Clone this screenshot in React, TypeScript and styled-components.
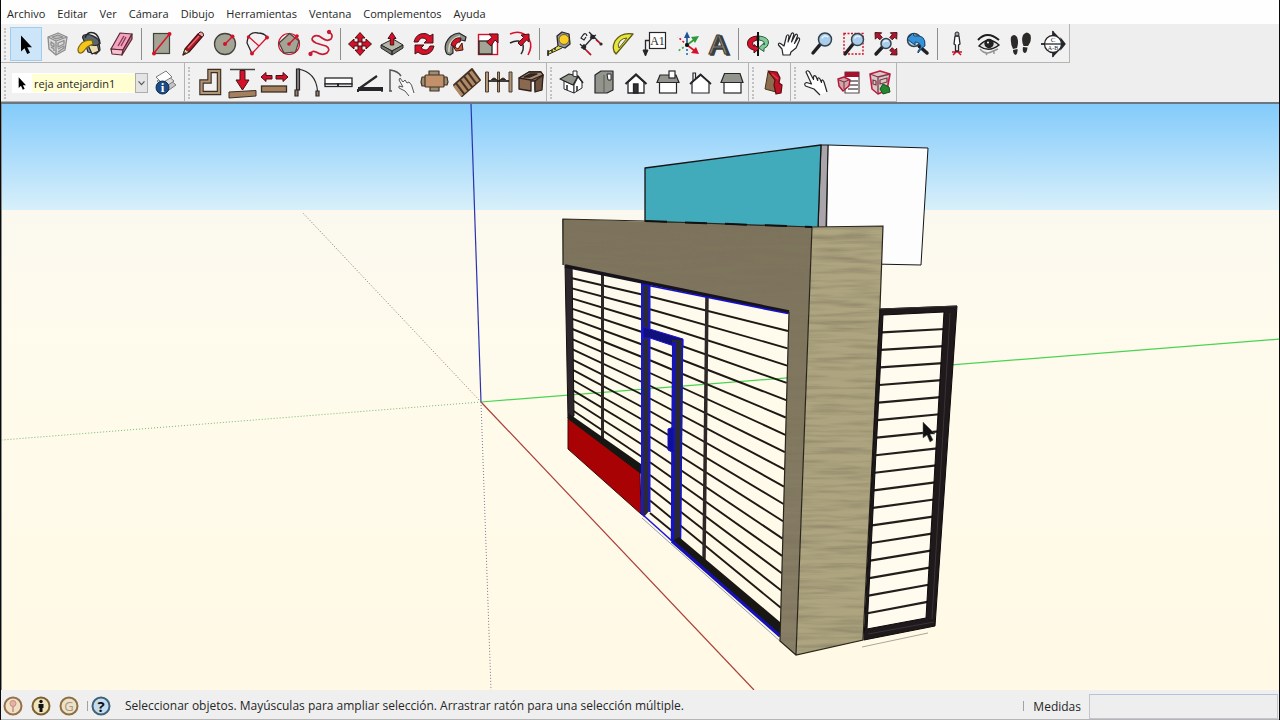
import React, { ReactNode } from 'react';
import styled, { createGlobalStyle } from 'styled-components';

const GlobalStyle = createGlobalStyle`
  * { box-sizing: border-box; }
  body {
    margin: 0;
    background: #f0f0f0;
    color: #262626;
    font-family: "Open Sans", "Noto Sans", sans-serif;
    font-size: 12px;
  }
  button, select, input { font: inherit; color: inherit; }
`;

const AppWindow = styled.div`
  display: flex;
  flex-direction: column;
  min-height: 100vh;
  border: solid #0a0a0a;
  border-width: 0 1px;
  background: #f0f0f0;
`;

const MenuBar = styled.nav`
  display: flex;
  height: 24px;
  padding: 4px 0 0;
  background: #fdfefd;
`;

const MenuItem = styled.button`
  padding: 0 6px;
  border: 0;
  background: none;
  font-size: 11px;
  line-height: 20px;
  white-space: nowrap;
`;

const ToolbarArea = styled.div`
  display: flex;
  flex-direction: column;
  background: #efeeef;
  border-bottom: 2px solid #6c7680;
`;

const ToolbarRow = styled.div`
  display: flex;
  height: 39px;
`;

const Toolbar = styled.div<{ $endGap?: number }>`
  display: flex;
  align-items: center;
  padding: 2px ${p => p.$endGap ?? 0}px 0 2px;
  background: #f2f1f1;
  border-right: 1px solid #b4b4b4;
  border-bottom: 1px solid #b4b4b4;
`;

const Grip = styled.span`
  width: 3px;
  height: 32px;
  margin: 0 3px 0 1px;
  border-left: 2px dotted #c2c2c2;
`;

const Divider = styled.span`
  width: 1px;
  height: 32px;
  margin: 0 3px;
  background: #8e8e8e;
`;

const ToolButton = styled.button<{ $active?: boolean }>`
  display: block;
  width: 32px;
  height: 34px;
  padding: 0;
  border: 1px solid ${p => (p.$active ? '#9fcdf0' : 'transparent')};
  background: ${p => (p.$active ? '#cce5f8' : 'none')};
`;

const ToolIcon = styled.svg`
  display: block;
  width: 32px;
  height: 32px;
  margin-left: -1px;
  font-family: "Liberation Serif", serif;
`;

const LayerBox = styled.div`
  position: relative;
  display: flex;
  align-items: center;
  width: 136px;
  height: 20px;
  margin: 0 2px;
  background: #fff;
`;

const LayerPointer = styled.svg`
  width: 20px;
  height: 16px;
`;

const LayerSelect = styled.select`
  flex: 1;
  height: 18px;
  padding: 0 0 0 2px;
  border: 0;
  background: #ffffd2;
  font-size: 11px;
  appearance: none;
`;

const LayerArrow = styled.svg`
  position: absolute;
  right: 0;
  top: 0;
  width: 13px;
  height: 20px;
  background: #e4e4e4;
  border: 1px solid #adadad;
  pointer-events: none;
`;

const Viewport = styled.main`
  flex: 1 1 0;
  min-height: 400px;
  display: flex;
  border-left: 1px solid #8a8f94;
`;

const Scene = styled.svg`
  flex: 1;
  width: 100%;
  min-width: 0;
  background: #fffae8;
`;

const StatusBar = styled.footer`
  display: flex;
  align-items: center;
  height: 30px;
  padding: 3px 1px 0 2px;
  background: #efeff0;
  border-bottom: 1px solid #b5b5b5;
`;

const StatusButton = styled.button`
  width: 20px;
  height: 20px;
  padding: 0;
  margin-right: 8px;
  border: 0;
  background: none;
`;

const StatusIcon = styled.svg`
  display: block;
  width: 20px;
  height: 20px;
  font-family: "Open Sans", sans-serif;
`;

const StatusDivider = styled.span`
  width: 1px;
  height: 10px;
  margin-right: 3px;
  background: #a2a2a2;
`;

const Hint = styled.span`
  flex: 1;
  margin-left: 6px;
  line-height: 20px;
  white-space: nowrap;
  overflow: hidden;
`;

const MeasureLabel = styled.label`
  margin: 0 8px 0 6px;
`;

const MeasureInput = styled.input`
  width: 189px;
  height: 25px;
  border: 1px solid #c2c6cc;
  border-top-color: #b9c3d8;
  background: #eeeeee;
`;

const RED = '#d5112a';
const INK = '#26262a';
const STONE = '#a3a494';
const WOOD = '#a5805f';

/* Block arrow pointing up, its tip at the given point. */
function Arrow({ x, y, r = 0, fill = RED, s = 1 }: { x: number; y: number; r?: number; fill?: string; s?: number }) {
  return (
    <path
      d="M0 0L5 5.500H2V9.500H-2V5.500H-5Z"
      transform={`translate(${x} ${y}) rotate(${r}) scale(${s})`}
      fill={fill}
      stroke="#4a1014"
      strokeWidth="1"
    />
  );
}

const pointer = <path d="M11 7.500V23.500L14.500 20.300L17.200 26L20 24.700L17.300 19.200H22Z" fill="#000" />;

const hand = (
  <path
    d="M9 27L8 21L4.500 17Q4 14.500 6.500 15.500L10 18L12.500 8Q14 5.500 15 8L14 14L17.500 5.500Q19.500 4 19.800 6.500L17.500 14L21.500 6.500Q23.500 5.500 23.500 8L20.500 15.500L24 10Q26 9.500 25.500 12L22 20L17 24L16 27Z"
    fill="#fff"
    stroke={INK}
    strokeWidth="1.200"
    strokeLinejoin="round"
  />
);

const pointingHand = (
  <path
    d="M27 25L24 15Q22.500 11.500 21.500 14V15.500L20 12Q18 9.500 17.700 12V13.500L16 9.500Q14 7.500 13.500 10V12.500L9.500 5Q7 2.500 6 5L11.500 17L6.500 15.500Q3.500 16.500 5.500 19L14 22L20 28"
    fill="#fff"
    stroke={INK}
    strokeWidth="1.200"
    strokeLinejoin="round"
  />
);

function Lens({ cx, cy, r, hx, hy }: { cx: number; cy: number; r: number; hx: number; hy: number }) {
  return (
    <>
      <path d={`M${cx - r * 0.7} ${cy + r * 0.7}L${hx} ${hy}`} stroke="#202024" strokeWidth="3.400" strokeLinecap="round" />
      <circle cx={cx} cy={cy} r={r} fill="#a9cdea" stroke="#34424e" strokeWidth="1.500" />
      <path d={`M${cx - r * 0.5} ${cy - 1}Q${cx - 1} ${cy - r * 0.8} ${cx + r * 0.5} ${cy - r * 0.4}`} fill="none" stroke="#e4f3ff" strokeWidth="1.500" />
    </>
  );
}

type Tool = { name: string; icon: ReactNode; active?: boolean };

const mainTools: Tool[][] = [
  [
    { name: 'Seleccionar', active: true, icon: pointer },
    {
      name: 'Crear componente',
      icon: (
        <g fill="#d9d9d9" stroke="#8c8c8c" strokeWidth="1.300" strokeLinejoin="round">
          <path d="M6 9L16 5L25 9L23 22L14 27L7 21Z" />
          <path d="M6 9L14 13L25 9M14 13V27M9 14L12 16V19L9 17ZM9 19L12 21V23M16 15L22 12.500V16L16 19ZM16 21L22 18V20L16 24" />
          <path d="M10 9L16 7L21 9L14 11Z" fill="#bbb" />
        </g>
      ),
    },
    {
      name: 'Pintar',
      icon: (
        <g stroke={INK} strokeWidth="1.200" strokeLinejoin="round">
          <path d="M9 9L25 14L26 22L22 26L14 24Z" fill="#8c9a9d" />
          <path d="M14 17L23 15L25 23L18 26Z" fill="#ecdcb0" />
          <ellipse cx="17" cy="12" rx="9" ry="4.500" transform="rotate(24 17 12)" fill="#59666d" />
          <path d="M11 10Q13 3 20 5Q25 7 26 16" fill="none" strokeWidth="1.500" />
          <path d="M18 12Q9 12 6 17Q3 21 4.500 24Q7 26.500 10 23Q13 18 19 16Z" fill="#f3c51d" stroke="#7b6413" />
        </g>
      ),
    },
    {
      name: 'Borrar',
      icon: (
        <g stroke="#5b2936" strokeWidth="1.200" strokeLinejoin="round">
          <path d="M5 21L14 5L26 6L17 22Z" fill="#f3a4bd" />
          <path d="M5 21L17 22L16 27L6 26Z" fill="#f7c1cf" />
          <path d="M17 22L26 6V11L16 27Z" fill="#c96c89" />
          <path d="M12 18L18 8M15 18L20 9" stroke="#8c3a55" strokeWidth="1.400" />
        </g>
      ),
    },
  ],
  [
    {
      name: 'Rectángulo',
      icon: (
        <>
          <rect x="8.500" y="5.500" width="16" height="20" fill={STONE} stroke="#43433d" strokeWidth="1.200" />
          <path d="M9 25L24.500 6" stroke={RED} strokeWidth="1.400" />
          <circle cx="9" cy="25.500" r="2" fill={RED} />
          <circle cx="24.500" cy="6" r="2" fill={RED} />
        </>
      ),
    },
    {
      name: 'Línea',
      icon: (
        <g strokeLinejoin="round">
          <path d="M6 27L8 21L21 6L25 9L12 24Z" fill="#b31927" stroke="#471016" strokeWidth="1.200" />
          <path d="M21 6L23 4Q27 4 26.500 8L25 9Z" fill="#e7a9a9" stroke="#471016" />
          <path d="M6 27L8 21L12 24Z" fill="#ead3a4" stroke="#43301c" />
          <path d="M6 27L8 24L9 25Z" fill="#111" />
          <path d="M11 20L22 8" stroke="#ee6a72" strokeWidth="1.200" />
        </g>
      ),
    },
    {
      name: 'Círculo',
      icon: (
        <>
          <circle cx="16" cy="16" r="10.500" fill={STONE} stroke="#43433d" strokeWidth="1.300" />
          <path d="M16 16L23.500 8.500" stroke={RED} strokeWidth="1.400" />
          <circle cx="16" cy="16" r="2" fill={RED} />
          <circle cx="23.500" cy="8.500" r="2" fill={RED} />
        </>
      ),
    },
    {
      name: 'Arco',
      icon: (
        <g fill="none">
          <path d="M11 25.500L6 15Q7 3 17 5Q23 5 26 9" stroke={INK} strokeWidth="1.300" />
          <path d="M11 25.500L26 9.500M8 9L18 18" stroke={RED} strokeWidth="1.300" />
          <circle cx="11" cy="25.500" r="2" fill={RED} />
          <circle cx="26" cy="9.500" r="2" fill={RED} />
          <circle cx="7.500" cy="9" r="1.700" fill={RED} />
        </g>
      ),
    },
    {
      name: 'Polígono',
      icon: (
        <>
          <circle cx="16" cy="16" r="10.500" fill="#f6e7e8" stroke={RED} strokeWidth="1.200" />
          <path d="M16.500 5.500L26 13L22.500 24L11 25L6 15Z" fill={STONE} stroke="#43433d" strokeWidth="1.200" />
          <path d="M16 16L24 8" stroke={RED} strokeWidth="1.400" />
          <circle cx="16" cy="16" r="1.800" fill={RED} />
          <circle cx="24" cy="8" r="1.800" fill={RED} />
        </>
      ),
    },
    {
      name: 'Mano alzada',
      icon: (
        <g fill="none" stroke="#c51b36" strokeWidth="1.700">
          <path d="M5.500 26Q7 22 11 24Q17 28 22 25Q26 21 21 18Q17 17 11 15Q5 12 8 9Q12 6 17 10Q22 14 26 11Q29 7 24 4" />
          <circle cx="5.500" cy="26" r="1.300" fill={RED} />
          <circle cx="24" cy="4" r="1.300" fill={RED} />
        </g>
      ),
    },
  ],
  [
    {
      name: 'Mover',
      icon: (
        <>
          <Arrow x={16} y={4.5} />
          <Arrow x={27.5} y={16} r={90} />
          <Arrow x={16} y={27.5} r={180} />
          <Arrow x={4.5} y={16} r={270} />
        </>
      ),
    },
    {
      name: 'Empujar/tirar',
      icon: (
        <g strokeLinejoin="round">
          <path d="M5 17L17 11L27 17L16 23Z" fill="#b6b8a7" stroke={INK} />
          <path d="M5 17L16 23V27L5 20ZM16 23L27 17V20L16 27Z" fill="#77796c" stroke={INK} />
          <path d="M16 4.500L20 10.500H17.700V17H14.300V10.500H12Z" fill={RED} stroke="#4a1014" />
        </g>
      ),
    },
    {
      name: 'Rotar',
      icon: (
        <g fill={RED} stroke="#4a1014" strokeWidth="1" strokeLinejoin="round">
          <path d="M6 14Q8 5 17 5.500Q20 6 22 8L25 6V15H16L19 12Q13 7 10 14Z" />
          <path d="M26 18Q24 27 15 26.500Q12 26 10 24L7 26V17H16L13 20Q19 25 22 18Z" />
        </g>
      ),
    },
    {
      name: 'Sígueme',
      icon: (
        <g strokeLinejoin="round">
          <path d="M7 26Q4 21 6 15Q10 6 19 5L26 9L25 13Q20 11 16 13Q12 17 13 25L10 27Z" fill="#8d9184" stroke={INK} strokeWidth="1.200" />
          <path d="M9 24Q8 12 20 8" fill="none" stroke="#d6d8cc" strokeWidth="1.500" />
          <path d="M11 17Q13 9 21 10L20 14Q16 14 15 19Z" fill={RED} stroke="#4a1014" />
          <path d="M13 18L18 21L22 15L23 22L16 23Z" fill="#d4582d" stroke="#4a1014" />
        </g>
      ),
    },
    {
      name: 'Escala',
      icon: (
        <>
          <rect x="6.500" y="6.500" width="19" height="20" fill="#fff" stroke={RED} strokeWidth="1.400" />
          <rect x="7" y="13" width="13" height="13" fill={STONE} stroke={INK} strokeWidth="1.300" />
          <path d="M26 6V15L23 12L19 18L14.500 14L20 9.500L17 6Z" fill={RED} stroke="#4a1014" />
        </>
      ),
    },
    {
      name: 'Equidistancia',
      icon: (
        <g fill="none" strokeWidth="1.500">
          <path d="M6 6Q18 1 25 11Q29 18 24 27" stroke={RED} />
          <path d="M6 15Q16 10 19 17Q20 22 17 26" stroke={INK} />
          <path d="M25 6V14L22.500 12L17 18L14 15L19.500 9.500L17 7Z" fill={RED} stroke="#4a1014" strokeWidth="1" />
        </g>
      ),
    },
  ],
  [
    {
      name: 'Medir',
      icon: (
        <g stroke={INK} strokeLinejoin="round">
          <path d="M14 8L19 4L26 6L27 16L22 20L15 18Z" fill="#9295a3" strokeWidth="1.300" />
          <circle cx="21" cy="11.500" r="5" fill="#f8cd27" stroke="#735f18" />
          <path d="M15 18L5 24V26.500L19 20" fill="#eadf39" />
          <path d="M5 22V28M9 22V24M12 20V22" strokeWidth="1.500" />
        </g>
      ),
    },
    {
      name: 'Acotaciones',
      icon: (
        <g fill="none" stroke={INK} strokeWidth="1.200">
          <path d="M9 19L18 9M14 4L25 15M5 16L16 27M6 20L11 17M15 10L21 7M16 6V12M9 16V22" />
          <path d="M21 12L26 16M11 22L16 27" stroke={RED} strokeWidth="1.500" />
          <circle cx="18" cy="9" r="1.700" fill={INK} />
          <circle cx="9" cy="19" r="1.700" fill={INK} />
          <circle cx="26" cy="16" r="1" fill={RED} />
          <path d="M8 7L6 10L9 12L11 9M8 7Q11 4 12 8" />
        </g>
      ),
    },
    {
      name: 'Transportador',
      icon: (
        <g stroke="#5c5b19" strokeLinejoin="round">
          <path d="M9 26Q4 21 8 13Q14 4 26 6Z" fill="#e7e43a" strokeWidth="1.300" />
          <path d="M12 20Q10 17 13 13Q16 10 20 10Z" fill="#f2f1f1" />
        </g>
      ),
    },
    {
      name: 'Texto',
      icon: (
        <g stroke={INK}>
          <path d="M10 12.500H6.500V25" fill="none" strokeWidth="1.300" />
          <path d="M4 22L6.500 28L9 22Z" fill={INK} />
          <rect x="10.500" y="4.500" width="16" height="16" fill="#fff" strokeWidth="1.200" />
          <text x="18.500" y="17" textAnchor="middle" fontSize="12" fill={INK} stroke="none">A1</text>
        </g>
      ),
    },
    {
      name: 'Ejes',
      icon: (
        <g fill="none" strokeWidth="1.600">
          <path d="M16 17V8" stroke="#1d5594" />
          <path d="M13 10L16 3.500L19 10Z" fill="#1d5594" />
          <path d="M16 17L24 11" stroke="#2c9a36" />
          <path d="M20 9L28 8L24 15Z" fill="#2c9a36" />
          <path d="M16 17L24 23" stroke={RED} />
          <path d="M25 19L28 26L20 25Z" fill={RED} />
          <path d="M16 17V28" stroke="#2b6cb5" strokeDasharray="2 2" />
          <path d="M16 17L7 23" stroke="#36a73e" strokeDasharray="2 2" />
          <path d="M16 17L7 9" stroke={RED} strokeDasharray="2 2" />
          <circle cx="16" cy="17" r="2" fill="#111" />
        </g>
      ),
    },
    {
      name: 'Texto 3D',
      icon: (
        <g fontSize="28" fontFamily="Liberation Sans" textAnchor="middle">
          <text x="17" y="26.500" fill="#3c3d3b" stroke="#3c3d3b" strokeWidth="1.500">A</text>
          <text x="15" y="25.500" fill="#8c8d87" stroke="#3c3d3b" strokeWidth="1">A</text>
        </g>
      ),
    },
  ],
  [
    {
      name: 'Orbitar',
      icon: (
        <g strokeLinejoin="round">
          <path d="M16 15V28" stroke="#111" strokeWidth="2" />
          <path d="M17 8Q27 9 26.500 15Q26 19 22 20.500V23.500L16.500 20L22 15V17Q24 13 17 12Z" fill="#83c79a" stroke="#23663c" />
          <path d="M15 8Q5 9 5.500 16Q6 21 12 22V25L17 20.500L12 16.500V18.500Q8 14 15 12Z" fill={RED} stroke="#4a1014" />
          <path d="M16 4V15" stroke="#111" strokeWidth="2" />
        </g>
      ),
    },
    { name: 'Desplazar', icon: hand },
    { name: 'Zoom', icon: <Lens cx={19} cy={11.5} r={6.500} hx={7} hy={25} /> },
    {
      name: 'Ventana de zoom',
      icon: (
        <>
          <rect x="6" y="5.500" width="19" height="20.500" fill="none" stroke={RED} strokeWidth="1.400" strokeDasharray="2 1.500" />
          <Lens cx={19.500} cy={11.5} r={6} hx={7} hy={26} />
        </>
      ),
    },
    {
      name: 'Ver modelo centrado',
      icon: (
        <>
          <Arrow x={5} y={4.5} r={-45} s={0.9} fill="#a91733" />
          <Arrow x={27} y={4.5} r={45} s={0.9} fill="#a91733" />
          <Arrow x={27} y={27} r={135} s={0.9} fill="#a91733" />
          <Lens cx={16} cy={15.500} r={5} hx={6} hy={26} />
        </>
      ),
    },
    {
      name: 'Vista previa',
      icon: (
        <>
          <path d="M17 18L25 25" stroke="#202024" strokeWidth="3.500" strokeLinecap="round" />
          <circle cx="12" cy="12" r="6.500" fill="#a9cdea" stroke="#34424e" strokeWidth="1.500" />
          <path d="M5 11L11 5L12 8Q24 6 23 18L20 20L16 25L16 23L19 19Q18 14 13 14L13 17Z" fill="#3692d8" stroke="#174167" />
        </>
      ),
    },
  ],
  [
    {
      name: 'Situar cámara',
      icon: (
        <g stroke={INK} strokeLinejoin="round">
          <path d="M16 23L12 27M16 23L20 27M11 24H21" stroke={RED} strokeWidth="1.500" />
          <path d="M14 8L13 16L14.500 17V23H17.500V17L19 16L18 8Z" fill="#fff" strokeWidth="1.300" />
          <circle cx="16" cy="6" r="2" fill="#aaa" />
        </g>
      ),
    },
    {
      name: 'Girar',
      icon: (
        <g fill="none" stroke="#1e1e1e" strokeWidth="1.400">
          <path d="M5 12Q14 2 26 12" strokeWidth="2" />
          <path d="M6 18Q15 7 26 17Q16 25 6 18Z" fill="#e0e0e0" />
          <circle cx="16" cy="15.500" r="4" fill="#222" />
          <circle cx="15" cy="14.500" r="1" fill="#fff" stroke="none" />
          <path d="M7 21Q12 27 18 24L25 21M12 24L14 27M21 23V26" stroke="#909090" />
        </g>
      ),
    },
    {
      name: 'Caminar',
      icon: (
        <g fill="#2c2a29">
          <path d="M6 9Q9 5 12 9Q14 14 12 20L8 21Q5 15 6 9Z" />
          <path d="M8 22L12.500 21Q13 26 10.500 27Q8 26 8 22Z" />
          <path d="M18 7Q22 2 25.500 7Q27 13 23 18L18.500 18Q16 12 18 7Z" />
          <path d="M18 19L22.500 19.500Q22 25 19.500 25Q17 24 18 19Z" />
        </g>
      ),
    },
    {
      name: 'Plano de sección',
      icon: (
        <g stroke={INK} strokeWidth="1.300">
          <path d="M16 3V29M4 16H28" />
          <path d="M16 4L20 8H16ZM16 28L20 24H16ZM24 11L28 16L24 21Z" fill={INK} />
          <circle cx="16" cy="16" r="8.500" fill="#fff" />
          <path d="M4 16H28" />
          <text x="16" y="14" textAnchor="middle" fontSize="7" stroke="none" fill={INK}>C</text>
          <text x="16" y="22" textAnchor="middle" fontSize="6" stroke="none" fill={INK}>A-B</text>
        </g>
      ),
    },
  ],
];

const layerManager: Tool = {
  name: 'Gestor de capas',
  icon: (
    <>
      <g fill="#fff" stroke="#7a7a7a" strokeLinejoin="round">
        <path d="M9 18L19 12L26 18L16 25Z" fill="#c6c6c6" />
        <path d="M7 14L17 8L24 14L14 21Z" fill="#ddd" />
        <path d="M6 10L16 4L22 10L12 16Z" />
      </g>
      <circle cx="12.500" cy="20.500" r="6.500" fill="#1c4b86" stroke="#0d2b52" />
      <text x="12.500" y="25" textAnchor="middle" fontSize="13" fontWeight="700" fill="#fff">i</text>
    </>
  ),
};

const buildTools: Tool[] = [
  {
    name: 'Muro',
    icon: (
      <g strokeLinejoin="miter" fill="none">
        <path d="M15.500 4H25V26H7.500V14.500H15.500Z" stroke="#3b2e25" strokeWidth="4.500" />
        <path d="M15.500 4H25V26H7.500V14.500H15.500Z" stroke="#b29476" strokeWidth="2.200" />
      </g>
    ),
  },
  {
    name: 'Altura',
    icon: (
      <>
        <path d="M4 2.500H29" stroke="#444" strokeWidth="1.500" />
        <path d="M3 25L30 23.500V29L3 31Z" fill={WOOD} stroke="#3b2e25" />
        <path d="M14 3.500H19V13H23L16.500 23L10 13H14Z" fill={RED} stroke="#4a1014" />
      </>
    ),
  },
  {
    name: 'Longitud',
    icon: (
      <>
        <rect x="3.500" y="19" width="25" height="6" fill={WOOD} stroke="#3b2e25" strokeWidth="1.300" />
        <path d="M3 10L8 5.500V8.500H14V12H8V14.500ZM30 10L25 5.500V8.500H18V12H25V14.500Z" fill={RED} stroke="#4a1014" />
      </>
    ),
  },
  {
    name: 'Puerta',
    icon: (
      <g fill="none" stroke={INK} strokeWidth="1.200">
        <path d="M8 2Q26 5 27.500 24" />
        <path d="M6.500 2H9.500V23H6.500Z" fill="#8b847b" />
        <path d="M5 23H8V29H5ZM26 24H29V29H26Z" fill={WOOD} />
      </g>
    ),
  },
  {
    name: 'Ventana',
    icon: (
      <g fill="#fff" stroke={INK} strokeWidth="1.300">
        <rect x="3" y="11" width="27" height="6" />
        <rect x="3" y="17" width="27" height="2.500" />
        <path d="M16 16V19" strokeWidth="2" />
      </g>
    ),
  },
  {
    name: 'Puerta abatible',
    icon: (
      <g fill="none" stroke={INK} strokeWidth="1.400">
        <path d="M6 21L23 9" strokeWidth="2.200" />
        <path d="M4 21H28V23H4V25" strokeWidth="2" />
        <path d="M28 20V25" />
      </g>
    ),
  },
  {
    name: 'Editar puerta',
    icon: (
      <>
        <path d="M4 24V3Q12 4 15 9M3 24H6" fill="none" stroke="#555" strokeWidth="1.500" />
        <path d="M28 26L25.500 18L23 15L21 16L19 13L17 15L14 11L13 13L17 20L13 19V21L19 24L23 29" fill="#f7f7f7" stroke="#555" />
      </>
    ),
  },
  {
    name: 'Mobiliario',
    icon: (
      <g fill="#a87f5a" stroke="#473224" strokeWidth="1.200" strokeLinejoin="round">
        <path d="M11 4H21V9H11ZM12 19H21V24H12ZM4 10H9V19H4L3 15ZM24 10H29L30 15L29 18H24Z" fill="#988f78" />
        <rect x="7" y="8" width="19" height="12" rx="1" fill="#c2916a" />
      </g>
    ),
  },
  {
    name: 'Cubierta',
    icon: (
      <g strokeLinejoin="round">
        <path d="M4 18L22 2L30 13L12 29Z" fill="#473224" stroke="#473224" strokeWidth="2" />
        <path d="M4.500 18.500L12 28.500M8.500 15L16 25M12.500 11.500L20 21.500M16.500 8L24 18M20.500 4.500L28 14.500" stroke="#b08a66" strokeWidth="3.200" />
      </g>
    ),
  },
  {
    name: 'Columnas',
    icon: (
      <g stroke="#4e3e30">
        <path d="M3.500 5H6.500V25H3.500ZM27 5H30V25H27ZM15.500 5H17.500V25H15.500Z" fill="#b29476" />
        <path d="M6 14H27" stroke="#111" strokeWidth="1.600" />
        <path d="M9 13Q12 9 15 13ZM18 13Q21 9 24 13Z" fill="#111" />
      </g>
    ),
  },
  {
    name: 'Habitación',
    icon: (
      <g stroke="#2f211a" strokeWidth="1.300" strokeLinejoin="round">
        <path d="M5 11L15 5L27 5L29 8L27 23L21 23V14L17 14V24L5 22Z" fill="#8a6951" />
        <path d="M5 11L15 5L27 5L29 8L17 13Z" fill="#a28a76" />
        <path d="M10 10L16 7H23L16 10Z" fill="#3b2b22" />
        <path d="M21 14L29 8L28 23L21 25Z" fill="#6b5340" />
      </g>
    ),
  },
];

const viewTools: Tool[] = [
  {
    name: 'Iso',
    icon: (
      <g stroke={INK} strokeLinejoin="round">
        <path d="M8 14L18 18V26L8 22Z" fill="#fff" />
        <path d="M18 18L22 10L26 15V21L18 26Z" fill="#fff" />
        <path d="M4 12L13 7L22 9L17 18Z" fill="#92958b" strokeWidth="1.200" />
        <path d="M22 9L27 16" strokeWidth="1.500" />
        <path d="M17 4H21V10L17 9Z" fill="#fff" />
        <path d="M11 18V23M21 19V24" strokeWidth="1.500" />
      </g>
    ),
  },
  {
    name: 'Planta',
    icon: (
      <g stroke={INK} strokeLinejoin="round">
        <path d="M7 8L13 4H25V23L19 26H7Z" fill="#92958b" strokeWidth="1.200" />
        <path d="M16 8V25" stroke="#5b5d57" />
        <path d="M19 7H23V13H20Z" fill="#fff" />
      </g>
    ),
  },
  {
    name: 'Frontal',
    icon: (
      <g stroke={INK} strokeWidth="1.300">
        <path d="M8 15L16 8L24 15V26H8Z" fill="#fff" />
        <path d="M5.500 17L16 7.500L26.500 17" fill="none" strokeWidth="2.200" />
        <path d="M13.500 17H18V26H13.500Z" fill="#333" />
      </g>
    ),
  },
  {
    name: 'Derecha',
    icon: (
      <g stroke={INK} strokeWidth="1.200">
        <rect x="7.500" y="15" width="17" height="11" fill="#fff" />
        <path d="M8 8H24L27 15.500H5Z" fill="#92958b" />
        <rect x="17" y="4" width="6" height="7" fill="#fff" />
      </g>
    ),
  },
  {
    name: 'Posterior',
    icon: (
      <g stroke={INK} strokeWidth="1.200">
        <path d="M9 14V6H11.500V12" fill="#fff" />
        <path d="M8 15L17 8L25 15V26H8Z" fill="#fff" />
        <path d="M6 17L16.500 7.500L27 17" fill="none" strokeWidth="1.700" />
      </g>
    ),
  },
  {
    name: 'Izquierda',
    icon: (
      <g stroke={INK} strokeWidth="1.200">
        <rect x="8" y="15" width="17" height="11" fill="#fff" />
        <path d="M8.500 6.500H24L27 15.500H5Z" fill="#92958b" />
      </g>
    ),
  },
];

const sectionTool: Tool[] = [
  {
    name: 'Corte de sólido',
    icon: (
      <g strokeLinejoin="round">
        <path d="M10 5L18 10V25L7 22Z" fill="#8c6d4c" stroke="#49351f" />
        <path d="M10 4L19 5L22 11L21 16L24 18L23 26L18 27L16 18L17 13Z" fill="#bd1526" stroke="#5e0a13" strokeWidth="1.200" />
        <path d="M14 7L20 12" stroke="#e23a46" strokeWidth="1.500" />
      </g>
    ),
  },
];

const dynamicTools: Tool[] = [
  { name: 'Interactuar', icon: pointingHand },
  {
    name: 'Opciones de componente',
    icon: (
      <g strokeLinejoin="round">
        <rect x="13" y="5" width="14" height="21" fill="#fff" stroke="#5b4a4c" strokeWidth="1.200" />
        <path d="M13 5H27V10H13Z" fill="#a5122e" />
        <path d="M18 14H26M18 18H26M16 22H26" stroke="#655f60" strokeWidth="1.400" />
        <path d="M6 12L12 10L18 13L17 19L11 24L7 19Z" fill="#d7a3aa" stroke="#b3193a" strokeWidth="1.500" />
        <path d="M7 13L12 15L17 13M12 15V22" fill="none" stroke="#63373e" />
      </g>
    ),
  },
  {
    name: 'Atributos de componente',
    icon: (
      <g strokeLinejoin="round">
        <path d="M6 7L16 4L26 7L23 23L14 27L8 22Z" fill="#d7c9c8" stroke="#c51b43" strokeWidth="1.600" />
        <path d="M6 7L14 10L26 7M14 10V27M9 13L12 14V18L9 17ZM16 13L23 11V15L16 17Z" fill="none" stroke="#7d3847" strokeWidth="1.300" />
        <path d="M16 22L19 17L25 20L26 25L19 27Z" fill="#258531" stroke="#12561b" />
      </g>
    ),
  },
];

function Tools({ items }: { items: Tool[] }) {
  return (
    <>
      {items.map(t => (
        <ToolButton key={t.name} type="button" title={t.name} aria-label={t.name} $active={t.active}>
          <ToolIcon viewBox="0 0 32 32" fill="none">{t.icon}</ToolIcon>
        </ToolButton>
      ))}
    </>
  );
}

const range = (n: number) => Array.from({ length: n }, (_, i) => i);

function Model() {
  return (
    <Scene viewBox="2 104 1277 586" preserveAspectRatio="xMidYMid slice" role="img" aria-label="Modelo 3D">
      <defs>
        <linearGradient id="sky" x1="0" y1="0" x2="0" y2="1">
          <stop offset="0" stopColor="#83cbfb" />
          <stop offset=".45" stopColor="#a9dbfb" />
          <stop offset="1" stopColor="#d9f0fa" />
        </linearGradient>
        <linearGradient id="ground" x1="0" y1="0" x2="0" y2="1">
          <stop offset="0" stopColor="#fbf8ef" />
          <stop offset=".3" stopColor="#fffbec" />
          <stop offset="1" stopColor="#fff9e5" />
        </linearGradient>
        <filter id="grain" x="0" y="0" width="100%" height="100%">
          <feTurbulence type="fractalNoise" baseFrequency="0.016 0.200" numOctaves="3" seed="8" />
          <feColorMatrix values="0 0 0 0 .200  0 0 0 0 .170  0 0 0 0 .110  1.300 0 0 0 -.5" result="n" />
          <feComposite in="n" in2="SourceGraphic" operator="in" result="g" />
          <feMerge>
            <feMergeNode in="SourceGraphic" />
            <feMergeNode in="g" />
          </feMerge>
        </filter>
        <linearGradient id="front" x1="0" y1="0" x2="0" y2="1">
          <stop offset="0" stopColor="#7d735c" />
          <stop offset="1" stopColor="#898067" />
        </linearGradient>
      </defs>
      <rect x="0" y="104" width="1280" height="107" fill="url(#sky)" />
      <rect x="0" y="210" width="1280" height="480" fill="url(#ground)" />

      <g fill="none">
        <path d="M471 104L481 402" stroke="#2a32ae" strokeWidth="1.200" />
        <path d="M481 402L1280 339" stroke="#4bd451" strokeWidth="1.200" />
        <path d="M481 402L754 690" stroke="#a93e38" strokeWidth="1.200" />
        <path d="M481 402L2 440" stroke="#74b774" strokeDasharray="1 2" />
        <path d="M481 402L302 212" stroke="#8a7168" strokeDasharray="1 2" />
        <path d="M481 402L491 690" stroke="#77779a" strokeDasharray="1 2" />
      </g>

      <g stroke="#151515" strokeLinejoin="round">
        <path d="M828 145L928 148L921 265L826 263Z" fill="#fdfdfe" strokeWidth="1" />
        <path d="M821 145H828L826 228H818Z" fill="#a9a5ab" />
        <path d="M645 168L821 145L818 228L645 222Z" fill="#41abbb" strokeWidth="1.300" />
      </g>

      <g stroke="#1d1814" strokeWidth="1.900">
        {range(14).map(k => (
          <path key={k} d={`M571 ${278 + k * 10.1}L642 ${294.500 + k * 12.5}`} />
        ))}
        {range(17).map(k => (
          <path key={k} d={`M650 ${296.500 + k * 12.75}L${788 - k * 0.45} ${331 + k * 17.300}`} />
        ))}
        <path d="M650 513L672 531" />
      </g>
      <path d="M602.500 272V438" stroke="#2d2827" strokeWidth="3" />
      <path d="M707 294L704 560" stroke="#2d2827" strokeWidth="3.500" />
      <path d="M565 264H572L574 416L568 418Z" fill="#2d272b" stroke="#141012" />
      <path d="M568 417L640 471L641 514L568 449Z" fill="#a80205" stroke="#3f0808" />
      <path d="M568 413L641 464V474L568 419Z" fill="#161612" />

      <path d="M641 279H650V510L644 517L641 514Z" fill="#2c2937" />
      <path d="M642 280V515M649.500 284V512" stroke="#1614e6" strokeWidth="2" />
      <path d="M643 327L683 339V347L674 346L650 338H643Z" fill="#11107a" stroke="#1814d8" />
      <path d="M672 340H683L681 541H671Z" fill="#2a2931" />
      <path d="M674 342L672.500 541" stroke="#1513c4" strokeWidth="3.500" />
      <path d="M682.500 340L680.500 539" stroke="#1414e0" strokeWidth="1.500" />
      <path d="M668 429L674 427V453L668 450Z" fill="#100f9c" stroke="#1414d4" />
      <path d="M642 514L672 541" stroke="#1717d4" strokeWidth="1.500" fill="none" />
      <path d="M679 537L780 622V637L671 542Z" fill="#181714" />
      <path d="M672 541L780 636" stroke="#1711b8" strokeWidth="3" />
      <path d="M642 518L781 642" stroke="#9a9aae" strokeWidth="1" />

      <path d="M562 219L812 227L796 655L780 641L789 312L563 265Z" fill="url(#front)" filter="url(#grain)" />
      <path d="M812 227L883 226L880 308L863 640L796 655Z" fill="#aea580" filter="url(#grain)" />
      <path
        d="M563 265V219L645 221L812 227L883 226L880 308L863 640L796 655L780 641L789 312M812 227L796 655"
        fill="none"
        stroke="#29251c"
        strokeWidth="1.200"
      />
      <path d="M645 221L812 227" stroke="#111" strokeWidth="2" strokeDasharray="22 18" />
      <path d="M565 266L789 312" stroke="#17131a" strokeWidth="3.500" />
      <path d="M641 284L788 313.500" stroke="#1611ce" strokeWidth="1.700" />

      <path d="M880 309L957 306L935 626L864 640Z" fill="#fffbee" />
      <g stroke="#231d1c" strokeWidth="2.200">
        {range(17).map(k => (
          <path key={k} d={`M${882 - k * 0.9} ${332.300 + k * 17.560}L${945 - k * 1.100} ${329 + k * 17.050}`} />
        ))}
      </g>
      <path d="M880 309L957 306L935 626L864 640ZM883 315L867 629L926 618L944 312Z" fill="#1f191b" fillRule="evenodd" stroke="#0d0a0c" />
      <path d="M880 309L957 306M950 313L932 619M868 634L934 622" stroke="#3a3335" />
      <path d="M862 647L928 633" stroke="#a9a69c" />

      <path d="M923 422V438L927 435L930 442L933 440L930 434H935Z" fill="#111" stroke="#5f5f5f" strokeWidth=".5" />
    </Scene>
  );
}

const menus = ['Archivo', 'Editar', 'Ver', 'Cámara', 'Dibujo', 'Herramientas', 'Ventana', 'Complementos', 'Ayuda'];

export default function App() {
  return (
    <AppWindow>
      <GlobalStyle />
      <MenuBar>
        {menus.map(m => (
          <MenuItem key={m} type="button">{m}</MenuItem>
        ))}
      </MenuBar>
      <ToolbarArea>
        <ToolbarRow>
          <Toolbar role="toolbar" aria-label="Principal">
            <Grip />
            {mainTools.map((group, i) => (
              <React.Fragment key={i}>
                {i > 0 && <Divider />}
                <Tools items={group} />
              </React.Fragment>
            ))}
          </Toolbar>
        </ToolbarRow>
        <ToolbarRow>
          <Toolbar role="toolbar" aria-label="Capas" $endGap={2}>
            <Grip />
            <LayerBox>
              <LayerPointer viewBox="4 4 24 24">{pointer}</LayerPointer>
              <LayerSelect aria-label="Capa">
                <option>reja antejardin1</option>
              </LayerSelect>
              <LayerArrow viewBox="0 0 13 20">
                <path d="M3 8L6.500 12L10 8" fill="none" stroke="#555" strokeWidth="1.300" />
              </LayerArrow>
            </LayerBox>
            <Tools items={[layerManager]} />
          </Toolbar>
          {[buildTools, viewTools, sectionTool, dynamicTools].map((tools, i) => (
            <Toolbar key={i} role="toolbar">
              <Grip />
              <Tools items={tools} />
            </Toolbar>
          ))}
        </ToolbarRow>
      </ToolbarArea>
      <Viewport>
        <Model />
      </Viewport>
      <StatusBar>
        <StatusButton type="button" aria-label="Geolocalización">
          <StatusIcon viewBox="0 0 20 20">
            <circle cx="10" cy="10" r="8.500" fill="#efe0c6" stroke="#93704a" strokeWidth="2" />
            <circle cx="10" cy="7.500" r="3" fill="#e3b3a6" stroke="#c98f80" />
            <path d="M10 10V16" stroke="#c98f80" strokeWidth="1.500" />
          </StatusIcon>
        </StatusButton>
        <StatusButton type="button" aria-label="Créditos">
          <StatusIcon viewBox="0 0 20 20">
            <circle cx="10" cy="10" r="8.500" fill="#efe4bd" stroke="#7c602f" strokeWidth="2" />
            <circle cx="10" cy="5.500" r="1.700" fill="#111" />
            <path d="M7.500 8H12.500V12H11.500V16H8.500V12H7.500Z" fill="#111" />
          </StatusIcon>
        </StatusButton>
        <StatusButton type="button" aria-label="Iniciar sesión">
          <StatusIcon viewBox="0 0 20 20">
            <circle cx="10" cy="10" r="8.500" fill="#ece1cb" stroke="#8d6f3f" strokeWidth="2" />
            <text x="10" y="15" textAnchor="middle" fontSize="13" fill="#ab9878">G</text>
          </StatusIcon>
        </StatusButton>
        <StatusDivider />
        <StatusButton type="button" aria-label="Ayuda">
          <StatusIcon viewBox="0 0 20 20">
            <circle cx="10" cy="10" r="8.500" fill="#c4dced" stroke="#3e617a" strokeWidth="2" />
            <text x="10" y="15.500" textAnchor="middle" fontSize="15" fontWeight="700" fill="#111">?</text>
          </StatusIcon>
        </StatusButton>
        <Hint>Seleccionar objetos. Mayúsculas para ampliar selección. Arrastrar ratón para una selección múltiple.</Hint>
        <StatusDivider />
        <MeasureLabel htmlFor="medidas">Medidas</MeasureLabel>
        <MeasureInput id="medidas" type="text" />
      </StatusBar>
    </AppWindow>
  );
}
